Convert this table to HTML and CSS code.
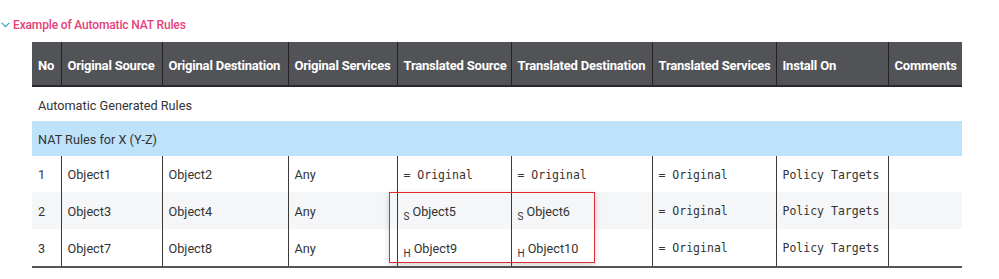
FILE: index.html
```html
<!DOCTYPE html>
<html>
<head>
<meta charset="utf-8">
<link rel="stylesheet" href="styles.css">
</head>
<body>
<div class="page">
  <div class="title">
    <svg class="chev" width="9" height="6" viewBox="0 0 9 6"><path d="M0.8 0.8 L4.5 4.6 L8.2 0.8" fill="none" stroke="#2aa6c0" stroke-width="1.2"/></svg>
    <span>Example of Automatic NAT Rules</span>
  </div>
  <div class="wrap">
    <table class="nat">
      <colgroup>
        <col style="width:29px"><col style="width:101px"><col style="width:126px"><col style="width:109px"><col style="width:114px"><col style="width:141px"><col style="width:124px"><col style="width:112px"><col style="width:74px">
      </colgroup>
      <thead>
        <tr>
          <th>No</th><th>Original Source</th><th>Original Destination</th><th>Original Services</th><th>Translated Source</th><th>Translated Destination</th><th>Translated Services</th><th>Install On</th><th>Comments</th>
        </tr>
      </thead>
      <tbody>
        <tr class="section"><td colspan="9">Automatic Generated Rules</td></tr>
        <tr class="group"><td colspan="9">NAT Rules for X (Y-Z)</td></tr>
        <tr class="rule">
          <td>1</td><td>Object1</td><td>Object2</td><td>Any</td><td class="mono">= Original</td><td class="mono">= Original</td><td class="mono">= Original</td><td class="mono">Policy Targets</td><td></td>
        </tr>
        <tr class="rule alt">
          <td>2</td><td>Object3</td><td>Object4</td><td>Any</td><td><span class="tag">S</span>Object5</td><td><span class="tag">S</span>Object6</td><td class="mono">= Original</td><td class="mono">Policy Targets</td><td></td>
        </tr>
        <tr class="rule last">
          <td>3</td><td>Object7</td><td>Object8</td><td>Any</td><td><span class="tag">H</span>Object9</td><td><span class="tag">H</span>Object10</td><td class="mono">= Original</td><td class="mono">Policy Targets</td><td></td>
        </tr>
      </tbody>
    </table>
    <div class="highlight"></div>
  </div>
</div>
</body>
</html>
```
FILE: styles.css
```css
html, body {
  margin: 0;
  padding: 0;
  background: #ffffff;
}
.page {
  padding: 16px 0 0 0;
  font-family: Roboto, "Liberation Sans", sans-serif;
}
.title {
  display: flex;
  align-items: center;
  height: 18px;
  padding-left: 1px;
  gap: 3px;
  color: #e5407a;
  font-size: 12px;
  font-weight: 500;
  letter-spacing: -0.15px;
}
.chev {
  display: block;
}
.wrap {
  position: relative;
  margin: 8px 0 0 32px;
  width: 930px;
}
.nat {
  border-collapse: collapse;
  table-layout: fixed;
  width: 930px;
  font-size: 12.7px;
  color: #333;
}
.nat th {
  background: #525357;
  color: #fff;
  font-family: Roboto, "Liberation Sans", sans-serif;
  font-weight: bold;
  font-size: 13px;
  letter-spacing: -0.2px;
  text-align: left;
  height: 44px;
  padding: 3px 6px 0 6px;
  border-left: 1px solid #222;
  border-bottom: 2px solid #2a2a2a;
  white-space: nowrap;
  overflow: hidden;
  box-sizing: border-box;
}
.nat th:first-child {
  border-left: none;
}
.nat td {
  padding: 1px 6px 0 6px;
  white-space: nowrap;
  box-sizing: border-box;
}
.nat tr.section td {
  height: 35px;
  padding-top: 3px;
}
.nat tr.group td {
  height: 35px;
  padding-top: 2px;
  background: #bde2fa;
}
.nat tr.rule td {
  height: 36px;
  border-left: 1px solid #3a3a3a;
}
.nat tr.rule.alt td {
  height: 37px;
  background: #f5f6f8;
}
.nat tr.rule.last td {
  height: 38px;
  border-bottom: 2px solid #555;
}
.nat tr.rule td:first-child {
  border-left: none;
}
.nat td.mono {
  font-family: "DejaVu Sans Mono", monospace;
  font-size: 11.5px;
}
.tag {
  font-size: 10px;
  position: relative;
  top: 4px;
  margin-right: 3px;
}
.highlight {
  position: absolute;
  left: 357px;
  top: 150px;
  width: 206px;
  height: 71px;
  border: 1px solid #e0282e;
  box-shadow: 0 2px 6px rgba(0,0,0,0.18);
  box-sizing: border-box;
  pointer-events: none;
}
```
